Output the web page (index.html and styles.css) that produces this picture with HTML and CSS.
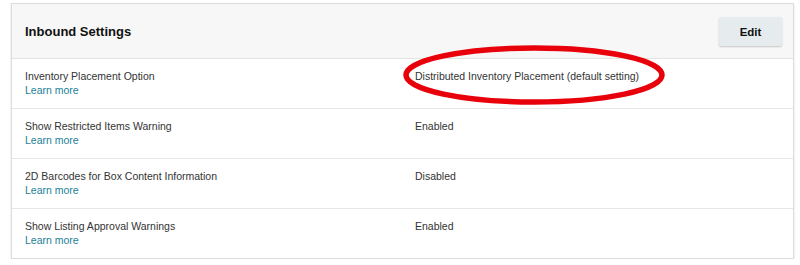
FILE: index.html
```html
<!DOCTYPE html>
<html>
<head>
<meta charset="utf-8">
<link rel="stylesheet" href="styles.css">
</head>
<body>
<div class="card">
  <div class="card-head">
    <h2 class="title">Inbound Settings</h2>
    <button class="edit">Edit</button>
  </div>
  <div class="row">
    <div class="label">Inventory Placement Option<br><a class="link">Learn more</a></div>
    <div class="value">Distributed Inventory Placement (default setting)
      <svg class="ellipse" width="270" height="64" viewBox="0 0 270 64"><ellipse cx="132" cy="31" rx="128" ry="27" fill="none" stroke="#e8000b" stroke-width="5.5"/></svg>
    </div>
  </div>
  <div class="row">
    <div class="label">Show Restricted Items Warning<br><a class="link">Learn more</a></div>
    <div class="value">Enabled</div>
  </div>
  <div class="row">
    <div class="label">2D Barcodes for Box Content Information<br><a class="link">Learn more</a></div>
    <div class="value">Disabled</div>
  </div>
  <div class="row last">
    <div class="label">Show Listing Approval Warnings<br><a class="link">Learn more</a></div>
    <div class="value">Enabled</div>
  </div>
</div>
</body>
</html>
```

FILE: styles.css
```css
html, body { margin: 0; padding: 0; background: #fff; }
body { font-family: "Liberation Sans", Arial, sans-serif; color: #222; }
.card {
  margin: 3px 0 0 11px;
  width: 781px;
  border: 1px solid #dcdcdc;
  box-shadow: 0 1px 2px rgba(0,0,0,0.12);
  background: #fff;
}
.card-head {
  height: 54px;
  background: #f7f7f7;
  border-bottom: 1px solid #e3e3e3;
  display: flex;
  align-items: center;
  justify-content: space-between;
  padding: 0 11px 0 13px;
}
.title { margin: 0; font-size: 13px; font-weight: bold; color: #111; }
.edit {
  width: 63px; height: 29px;
  margin-top: 1px;
  border: none; border-radius: 2px;
  background: #e6ecee;
  box-shadow: 0 1px 2px rgba(0,0,0,0.2);
  font-family: "Liberation Sans", Arial, sans-serif;
  font-size: 11.5px; font-weight: bold; color: #111;
}
.row {
  border-bottom: 1px solid #e6e6e6;
  display: flex;
  padding: 10px 0 0 13px;
  height: 39px;
  font-size: 10.5px;
  line-height: 14px;
}
.row.last { border-bottom: none; }
.label { width: 390px; color: #333; }
.link { color: #1a7f98; }
.value { color: #333; position: relative; }
.ellipse { position: absolute; left: -13px; top: -25px; }
```
